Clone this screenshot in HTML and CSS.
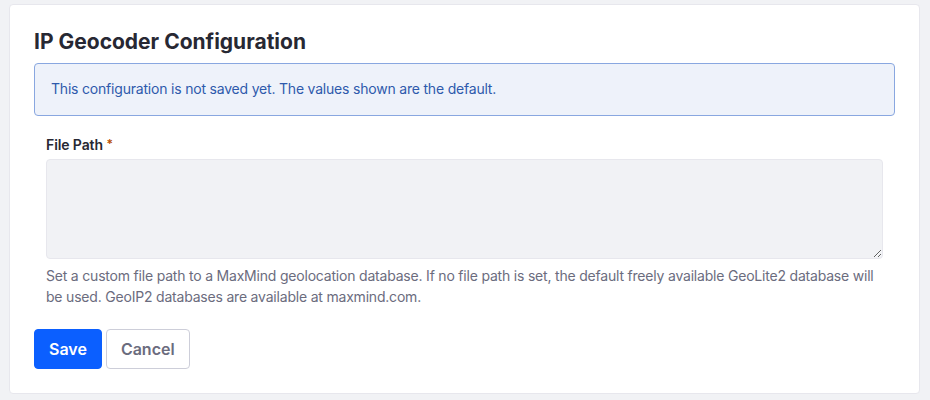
FILE: index.html
```html
<!DOCTYPE html>
<html>
<head>
<meta charset="utf-8">
<link rel="stylesheet" href="styles.css">
</head>
<body>
<div class="sheet">
  <h2 class="sheet-title">IP Geocoder Configuration</h2>
  <div class="alert">This configuration is not saved yet. The values shown are the default.</div>
  <div class="form-group">
    <label class="label" for="fp">File Path <span class="req">*</span></label>
    <textarea id="fp" class="textarea"></textarea>
    <div class="help">Set a custom file path to a MaxMind geolocation database. If no file path is set, the default freely available GeoLite2 database will be used. GeoIP2 databases are available at maxmind.com.</div>
  </div>
  <div class="actions">
    <button class="btn btn-primary">Save</button>
    <button class="btn btn-secondary">Cancel</button>
  </div>
</div>
</body>
</html>
```

FILE: styles.css
```css
* { box-sizing: border-box; }
html, body { margin: 0; padding: 0; }
body {
  background: #f1f2f5;
  font-family: Inter, "Noto Sans", sans-serif;
  padding: 4px 10px 0 9px;
  width: 930px;
  height: 400px;
  overflow: hidden;
}
.sheet {
  background: #fff;
  border: 1px solid #e7e7ed;
  border-radius: 4px;
  padding: 24px;
}
.sheet-title {
  margin: 0 0 8px 0;
  font-size: 21px;
  font-weight: 700;
  line-height: 26px;
  color: #272833;
}
.alert {
  background: #eef2fa;
  border: 1px solid #89a7e0;
  border-radius: 4px;
  color: #2e5aac;
  font-size: 14px;
  line-height: 20px;
  letter-spacing: -0.2px;
  padding: 15px 16px 16px;
  margin-bottom: 18px;
}
.form-group {
  padding: 0 12px;
  margin-bottom: 22px;
}
.label {
  display: block;
  color: #272833;
  font-size: 14px;
  font-weight: 600;
  line-height: 20px;
  letter-spacing: -0.1px;
  margin-bottom: 4px;
}
.req { color: #b95000; font-size: 12px; vertical-align: 2px; }
.textarea {
  display: block;
  width: 100%;
  height: 100px;
  background: #f1f2f5;
  border: 1px solid #e7e7ed;
  border-radius: 4px;
  resize: vertical;
  margin: 0;
}
.help {
  margin-top: 6px;
  color: #6b6c7e;
  font-size: 14px;
  line-height: 21px;
  letter-spacing: -0.2px;
}
.actions {
  display: flex;
  gap: 4px;
}
.btn {
  font-family: Inter, "Noto Sans", sans-serif;
  font-size: 16px;
  font-weight: 600;
  line-height: 24px;
  padding: 7px 14px;
  border-radius: 4px;
  border: 1px solid transparent;
}
.btn-primary { background: #0b5fff; color: #fff; border-color: #0b5fff; }
.btn-secondary { background: #fff; color: #6b6c7e; border-color: #cdced9; }
```
